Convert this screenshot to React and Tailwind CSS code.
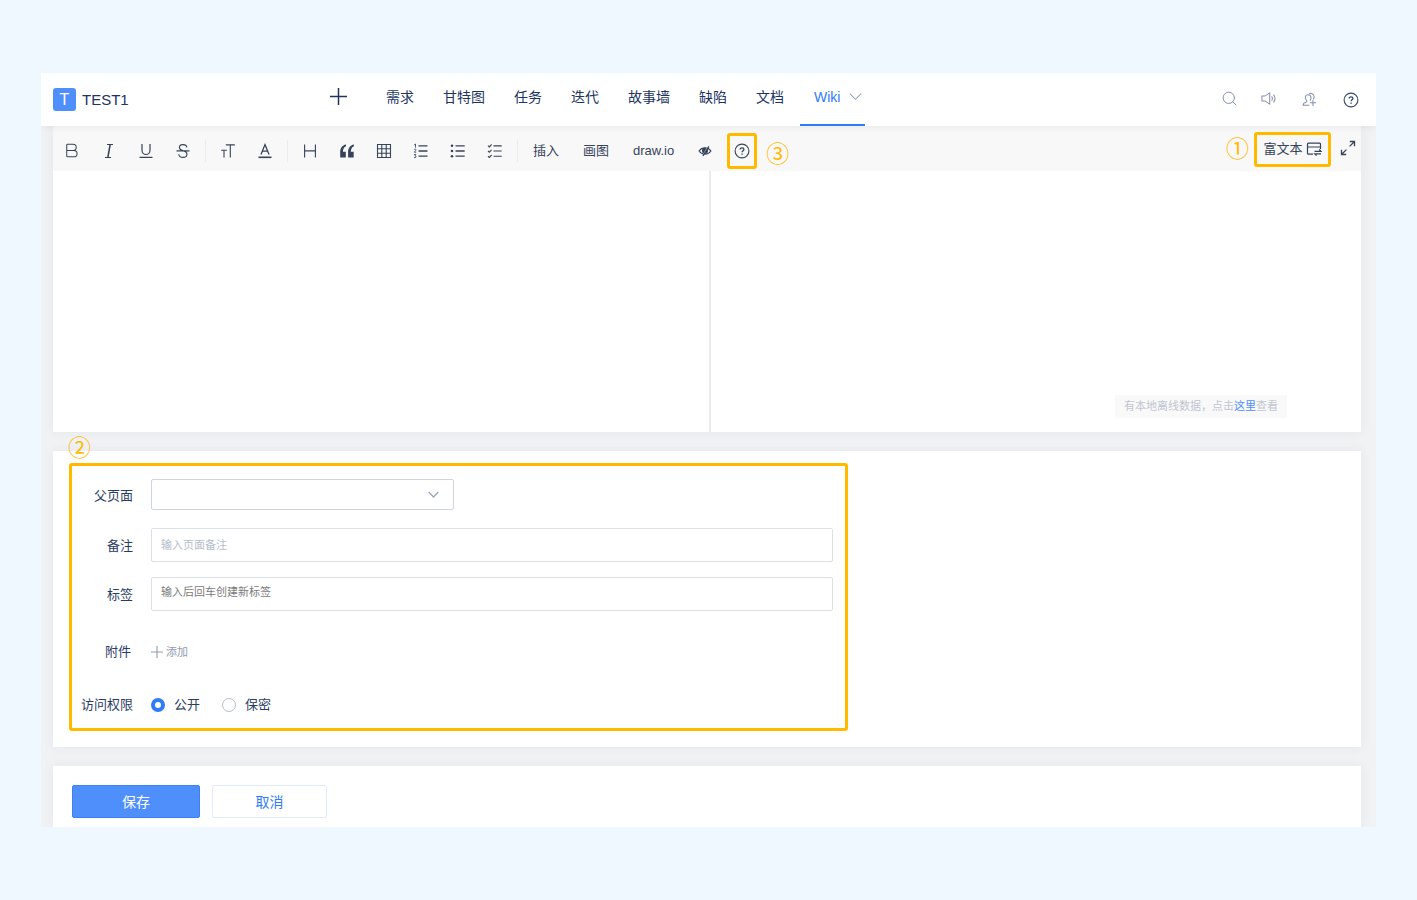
import React, { useState } from "react";
import { Bold, Search } from "lucide-react";

// Thin line icon on a 16px grid
const Icon = ({ children, size = 16, width = 1.1 }) => (
  <svg
    width={size}
    height={size}
    viewBox="0 0 16 16"
    fill="none"
    stroke="currentColor"
    strokeWidth={width}
    aria-hidden="true"
  >
    {children}
  </svg>
);

const ItalicIcon = () => (
  <Icon width={1.1}>
    <path d="M6 1.500h6M4 14.500h6" />
    <path d="M9.200 1.500 6.800 14.500" strokeWidth="1.500" />
  </Icon>
);

const UnderlineIcon = () => (
  <Icon width={1.2}>
    <path d="M4 1v6.500a4 4 0 0 0 8 0V1M1.500 14.400h13" />
  </Icon>
);

const StrikeIcon = () => (
  <Icon>
    <path d="M11.800 4.400C11.600 2.600 10.200 1.600 8 1.600S4.400 2.700 4.400 4.400c0 4.200 7.600 2.400 7.600 6.600 0 2-1.600 3.400-4 3.400s-4-1.200-4.200-3.200M1.500 7.900h13" />
  </Icon>
);

const FontSizeIcon = () => (
  <Icon>
    <path d="M5.800 1.900h9M10.300 1.900v12.600M1.200 7.200h5.600M4 7.200v7.300" />
  </Icon>
);

const FontColorIcon = () => (
  <Icon width={1.3}>
    <path d="M4 11.400 8 1.600l4 9.800M5.300 8.200h5.400" />
    <path d="M1.500 14.300h13" strokeWidth="1.600" />
  </Icon>
);

const HeadingIcon = () => (
  <Icon width={1.1}>
    <path d="M2.600 1.500v13M13.400 1.500v13M2.600 7.900h10.800" />
  </Icon>
);

const QuoteIcon = () => (
  <Icon>
    <g fill="currentColor" stroke="none">
      <path d="M7 1.500C3.200 2.200 1.200 5.200 1.200 9v5.500h5.600V8.800H3.900C4 6 5 4 7 3.200z" />
      <path d="M14.900 1.500C11.100 2.200 9.100 5.200 9.100 9v5.500h5.600V8.800h-2.900c.1-2.800 1.100-4.800 3.100-5.600z" />
    </g>
  </Icon>
);

const TableIcon = () => (
  <Icon>
    <path d="M1.500 1.500h13v13h-13zM1.500 5.800h13M1.500 10.200h13M5.800 1.500v13M10.200 1.500v13" />
  </Icon>
);

const OrderedListIcon = () => (
  <Icon width={1.3}>
    <path d="M5.500 2.800h9M5.500 8h9M5.500 13.200h9" />
    <path
      d="M1.300 1.700l1.200-.6v3.400M1.200 6.600c.6-.7 2-.5 1.800.4-.1.600-1.700 1.700-1.700 2.200H3.200M1.200 11.500h1.700l-1 1.300c1.600 0 1.400 2-.1 1.900-.3 0-.6-.1-.8-.3"
      strokeWidth="0.9"
    />
  </Icon>
);

const BulletListIcon = () => (
  <Icon width={1.3}>
    <path d="M5.500 2.800h9.200M5.500 8h9.200M5.500 13.200h9.200" />
    <g fill="currentColor" stroke="none">
      <circle cx="2" cy="2.800" r="1.300" />
      <circle cx="2" cy="8" r="1.300" />
      <circle cx="2" cy="13.200" r="1.300" />
    </g>
  </Icon>
);

const CheckListIcon = () => (
  <Icon>
    <path d="M6.500 2.900h8.200M6.500 8h8.200M6.500 13.200h8.200M1 2.600l1.300 1.300L4.600 1.500M1 7.900l1.300 1.300 2.300-2.400M1 13.100l1.300 1.300L4.600 12" />
  </Icon>
);

const EyeSlashIcon = () => (
  <Icon size={14} width={1.3}>
    <path d="M1.200 8C4.500 3.200 11.500 3.200 14.800 8 11.500 12.800 4.500 12.800 1.200 8z" />
    <circle cx="8" cy="7.800" r="2.800" fill="currentColor" />
    <path d="M11.700 2.600 5.300 13.600" stroke="#f8f8f8" strokeWidth="1.200" />
    <path d="M12.400 2.800 5.600 13.600" strokeWidth="1.500" />
  </Icon>
);

const HelpIcon = () => (
  <Icon>
    <circle cx="8" cy="8" r="6.900" />
    <path
      d="M6.200 6.500c0-2.300 3.700-2.200 3.700-.1 0 1.300-1.800 1.400-1.800 2.900"
      strokeWidth="1.300"
    />
    <path d="M8.100 10.400v1.400" strokeWidth="1.400" />
  </Icon>
);

const SpeakerIcon = () => (
  <Icon size={15}>
    <path d="M1 5.400h3.200L9.300 2v12l-5.100-3.400H1zM11.300 5.600c1.100 1.500 1.100 3.300 0 4.800M13.300 3.800c2.100 2.600 2.100 5.800 0 8.400" />
  </Icon>
);

const AddUserIcon = () => (
  <Icon size={15}>
    <path d="M7.800 14.200H1.200c0-2 1.400-2.900 3.400-3.500.8-.4.600-1.100.1-1.800C2.500 5.600 3.500 3 6.300 3c2 0 3.300 1.400 3.300 3.400 0 1.100-.4 2-1 2.900" />
    <path d="M7.600 2.100c1.200-1.100 5.300-.8 5.300 2.900 0 1.200-.4 2-.9 2.800M11.700 8.200v6.600M8.400 11.500H15" />
  </Icon>
);

const SwitchIcon = () => (
  <Icon width={1.2}>
    <path d="M14.500 8V3.200a1 1 0 0 0-1-1h-11a1 1 0 0 0-1 1v9a1 1 0 0 0 1 1H7M1.500 6h13M8.500 10.300H15l-1.800-1.800M15 12.800H8.700l1.800 1.800" />
  </Icon>
);

const ExpandIcon = () => (
  <Icon width={1.3}>
    <path d="M9.800 1.500h4.700v4.700M14.300 1.700 9.600 6.400M6.200 14.500H1.500V9.800M1.700 14.300l4.700-4.700" />
  </Icon>
);

const PlusIcon = ({ size }) => (
  <Icon size={size} width={1.4}>
    <path d="M8 0v16M0 8h16" />
  </Icon>
);

const ChevronIcon = ({ size, width }) => (
  <Icon size={size} width={width}>
    <path d="M1 4.500 8 11.500l7-7" />
  </Icon>
);

const navItems = ["需求", "甘特图", "任务", "迭代", "故事墙", "缺陷", "文档"];

const toolGroups = [
  [
    { label: "粗体", icon: <Bold size={19} strokeWidth={1.3} /> },
    { label: "斜体", icon: <ItalicIcon /> },
    { label: "下划线", icon: <UnderlineIcon /> },
    { label: "删除线", icon: <StrikeIcon /> },
  ],
  [
    { label: "字号", icon: <FontSizeIcon /> },
    { label: "颜色", icon: <FontColorIcon /> },
  ],
  [
    { label: "标题", icon: <HeadingIcon /> },
    { label: "引用", icon: <QuoteIcon /> },
    { label: "表格", icon: <TableIcon /> },
    { label: "有序列表", icon: <OrderedListIcon /> },
    { label: "无序列表", icon: <BulletListIcon /> },
    { label: "任务列表", icon: <CheckListIcon /> },
  ],
];

const Marker = ({ children }) => (
  <span className="text-[23px] leading-6 text-[#ffba00]">{children}</span>
);

const ToolButton = ({ label, children }) => (
  <button
    type="button"
    aria-label={label}
    className="flex h-9 w-[37px] shrink-0 items-center justify-center"
  >
    {children}
  </button>
);

const Header = () => (
  <header className="relative z-10 flex h-[53px] bg-white pl-3 pr-[17px] text-[#21345f] shadow-[0_2px_6px_rgba(0,0,0,0.06)]">
    <div className="flex w-[277px] shrink-0 items-center gap-[6px]">
      <span className="flex h-[23px] w-[23px] items-center justify-center rounded-[3px] bg-[#4f8ffb] text-base text-white">
        T
      </span>
      <span className="pt-px text-[15px]">TEST1</span>
    </div>
    <nav className="flex shrink-0 items-center gap-[29px] pb-[6px] text-sm">
      <button type="button" aria-label="新建" className="mr-[10px]">
        <PlusIcon size={17} />
      </button>
      {navItems.map((item) => (
        <a key={item} href="#">
          {item}
        </a>
      ))}
    </nav>
    <a
      href="#"
      className="ml-4 flex shrink-0 items-center gap-[9px] border-b-2 border-[#2f7cf6] pb-1 pl-[14px] pr-[3px] text-sm text-[#2f7cf6]"
    >
      Wiki
      <span className="text-[#98a3b8]">
        <ChevronIcon size={13} width={1.3} />
      </span>
    </a>
    <div className="ml-auto flex shrink-0 items-center gap-[23px] text-[#8590a9]">
      <button type="button" aria-label="搜索" className="pb-[3px]">
        <Search size={17} strokeWidth={1.4} />
      </button>
      <button type="button" aria-label="公告" className="pb-[3px]">
        <SpeakerIcon />
      </button>
      <button type="button" aria-label="邀请成员" className="ml-[3px]">
        <AddUserIcon />
      </button>
      <button type="button" aria-label="帮助" className="ml-[3px] text-[#34466d]">
        <HelpIcon />
      </button>
    </div>
  </header>
);

const Toolbar = () => (
  <div className="flex h-[45px] items-center bg-[#f8f8f8] text-[13px] text-[#36435a]">
    <div className="flex items-center pt-1">
      {toolGroups.map((group, i) => (
        <React.Fragment key={i}>
          {group.map((tool) => (
            <ToolButton key={tool.label} label={tool.label}>
              {tool.icon}
            </ToolButton>
          ))}
          <span className="ml-1 mr-[3px] h-[22px] w-px bg-[#ececef]" />
        </React.Fragment>
      ))}
      {["插入", "画图", "draw.io"].map((text) => (
        <button key={text} type="button" className="shrink-0 px-3">
          {text}
        </button>
      ))}
      <ToolButton label="预览">
        <EyeSlashIcon />
      </ToolButton>
      <button
        type="button"
        aria-label="语法帮助"
        className="mx-1 flex h-9 w-[30px] shrink-0 items-center justify-center rounded-[3px] border-3 border-[#ffba00]"
      >
        <HelpIcon />
      </button>
      <span className="ml-[5px] mt-2">
        <Marker>③</Marker>
      </span>
    </div>
    <div className="ml-auto flex shrink-0 items-center pr-[5px] pt-px">
      <Marker>①</Marker>
      <button
        type="button"
        className="ml-[5px] flex h-[35px] w-[77px] items-center justify-center gap-[3px] rounded-[3px] border-3 border-[#ffba00]"
      >
        富文本
        <SwitchIcon />
      </button>
      <button type="button" aria-label="全屏" className="ml-[9px] pb-[2px]">
        <ExpandIcon />
      </button>
    </div>
  </div>
);

const Panel = ({ className = "", children }) => (
  <section
    className={`bg-white shadow-[0_0_12px_rgba(40,56,96,0.06)] ${className}`}
  >
    {children}
  </section>
);

const Label = ({ htmlFor, children }) => (
  <label htmlFor={htmlFor} className="w-[61px] shrink-0 pt-[2px] text-right">
    {children}
  </label>
);

const Radio = ({ value, checked, onChange, children }) => (
  <label className="flex items-center gap-[9px]">
    <input
      type="radio"
      name="access"
      value={value}
      checked={checked}
      onChange={() => onChange(value)}
      className="h-[14px] w-[14px] appearance-none rounded-full border border-[#b6bfcd] bg-white checked:border-4 checked:border-[#2f7cf6]"
    />
    {children}
  </label>
);

const PageForm = () => {
  const [access, setAccess] = useState("public");

  return (
    <div className="relative w-full max-w-[779px] rounded-[3px] border-3 border-[#ffba00] pb-[13px] pr-3 pt-[13px] text-[13px] text-[#2b3c63]">
      <span className="absolute -left-1 -top-[30px]">
        <Marker>②</Marker>
      </span>
      <div className="flex items-center gap-[18px]">
        <Label htmlFor="parent">父页面</Label>
        <div className="relative w-[303px]">
          <select
            id="parent"
            className="block h-[31px] w-full appearance-none rounded-[2px] border border-[#cfd5de] bg-white px-2"
          />
          <span className="pointer-events-none absolute right-[15px] top-[10px] text-[#9aa7b8]">
            <ChevronIcon size={11} width={2} />
          </span>
        </div>
      </div>
      <div className="mt-[18px] flex items-center gap-[18px]">
        <Label htmlFor="remark">备注</Label>
        <input
          id="remark"
          type="text"
          placeholder="输入页面备注"
          className="h-[34px] min-w-0 flex-1 rounded-[2px] border border-[#dcdfe4] px-[9px] text-[11px] placeholder:text-[#b4bccb]"
        />
      </div>
      <div className="mt-[15px] flex items-center gap-[18px]">
        <Label htmlFor="tags">标签</Label>
        <input
          id="tags"
          type="text"
          placeholder="输入后回车创建新标签"
          className="h-[34px] min-w-0 flex-1 rounded-[2px] border border-[#dcdfe4] px-[9px] pb-1 text-[11px] placeholder:text-[#7b7b7b]"
        />
      </div>
      <div className="mt-[31px] flex h-5 items-center">
        <span className="mr-5 w-[59px] shrink-0 text-right">附件</span>
        <button
          type="button"
          className="flex items-center gap-[3px] text-[11px] text-[#8f9ab0]"
        >
          <PlusIcon size={12} />
          添加
        </button>
      </div>
      <fieldset className="mt-[33px] flex h-5 items-center">
        <legend className="float-left mr-[18px] w-[61px] text-right">
          访问权限
        </legend>
        <div className="flex gap-[22px]">
          <Radio
            value="public"
            checked={access === "public"}
            onChange={setAccess}
          >
            公开
          </Radio>
          <Radio
            value="private"
            checked={access === "private"}
            onChange={setAccess}
          >
            保密
          </Radio>
        </div>
      </fieldset>
    </div>
  );
};

const App = () => {
  return (
    <div className="min-h-screen bg-[#eff8ff] px-[41px] py-[73px] font-['Liberation_Sans','Noto_Sans_CJK_SC',sans-serif]">
      <div className="overflow-hidden bg-[#f1f2f4]">
        <Header />
        <main className="flex flex-col gap-[19px] pl-3 pr-[15px]">
          <Panel>
            <Toolbar />
            <div className="grid h-[261px] grid-cols-[658fr_650fr]">
              <textarea
                aria-label="正文"
                className="resize-none border-r-2 border-[#ebebee] p-4 text-sm outline-none"
              />
              <div className="flex items-end justify-end pb-[14px] pr-[74px]">
                <p className="bg-[#f9f9f9] px-[9px] text-[11px] leading-[23px] text-[#bfc5d0]">
                  有本地离线数据，点击
                  <a href="#" className="text-[#4f8ffb]">
                    这里
                  </a>
                  查看
                </p>
              </div>
            </div>
          </Panel>
          <Panel className="px-4 pb-4 pt-3">
            <PageForm />
          </Panel>
          <Panel className="flex gap-3 px-[19px] pb-[9px] pt-[19px] text-sm">
            <button
              type="button"
              className="h-[33px] w-32 rounded-[2px] border border-[#3d82f7] bg-[#4f8ffb] text-white"
            >
              保存
            </button>
            <button
              type="button"
              className="h-[33px] w-[115px] rounded-[2px] border border-[#e0ebfe] bg-white text-[#2f7cf6]"
            >
              取消
            </button>
          </Panel>
        </main>
      </div>
    </div>
  );
};

export default App;
